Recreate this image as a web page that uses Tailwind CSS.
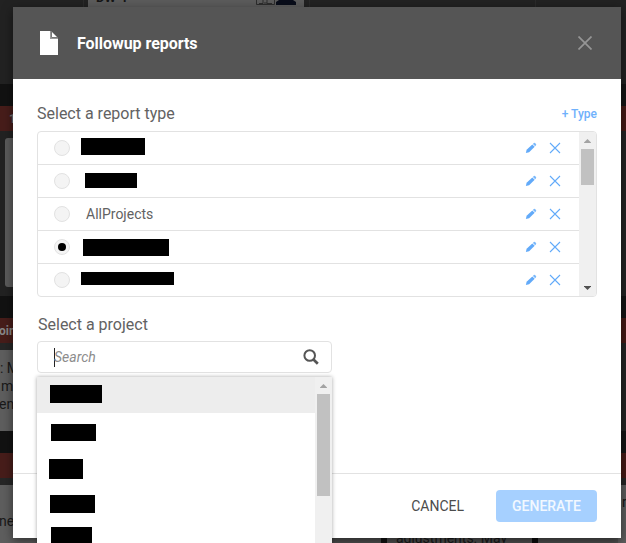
<!DOCTYPE html>
<html lang="en">
<head>
<meta charset="utf-8">
<title>Followup reports</title>
<script src="https://cdn.jsdelivr.net/npm/@tailwindcss/browser@4"></script>
</head>
<body class="h-[543px] w-[626px] overflow-hidden bg-[#222] font-[Roboto,sans-serif]">
<svg class="hidden">
  <symbol id="pencil" viewBox="0 0 12 12"><path d="M.9 11.100l.7-3.300L7.300 2.400l2.400 2.400L4.100 10.300z" fill="#62aaf9"/><path d="M7.900 1.900l.9-.8q.6-.5 1.200 0l1 1q.5.600 0 1.200l-.8.9z" fill="#7ab8fa"/></symbol>
  <symbol id="cross" viewBox="0 0 12 12"><path d="M1 1l10 10M11 1L1 11" stroke="#62aaf9" stroke-width="1.1" fill="none"/></symbol>
  <symbol id="up" viewBox="0 0 7 4"><path d="M0 4V3.500L3.500 0L7 3.500V4z" fill="currentColor"/></symbol>
</svg>
<div class="relative h-[543px] w-[626px] overflow-hidden">
  <!-- Dimmed board behind the dialog -->
  <div class="flex h-full justify-between">
    <div class="flex w-[83px] flex-col overflow-hidden whitespace-nowrap text-[13px] leading-[18px] text-[#191919]">
      <div class="h-[84px] shrink-0 bg-[#222]"></div>
      <div class="h-[22px] shrink-0 bg-[#121212]"></div>
      <div class="h-[25px] shrink-0 bg-[#471d1a] pl-[9px] text-[12px] leading-[26px] font-bold text-[#777]">10</div>
      <div class="h-[165px] shrink-0 bg-[#222] pt-[7px] pl-[5px]"><div class="h-[149px] rounded-[3px] bg-[#5c5c5c]"></div></div>
      <div class="h-[22px] shrink-0 bg-[#121212]"></div>
      <div class="h-[25px] shrink-0 bg-[#471d1a] text-[12px] leading-[26px] font-bold text-[#888]"><span class="-ml-px">oints</span></div>
      <div class="h-[7px] shrink-0 bg-[#262626]"></div>
      <div class="h-[81px] shrink-0 bg-[#5e5e5e] pt-[9px] text-[14px]"><div>: May</div><div class="ml-px">ments</div><div class="-ml-px">ents</div></div>
      <div class="h-[22px] shrink-0 bg-[#121212]"></div>
      <div class="h-[25px] shrink-0 bg-[#471d1a]"></div>
      <div class="h-[7px] shrink-0 bg-[#262626]"></div>
      <div class="h-[58px] shrink-0 bg-[#5e5e5e] pt-[27px] text-[14px]"><span class="-ml-px">nents</span></div>
    </div>
    <div class="flex h-full flex-1 flex-col justify-between overflow-hidden">
      <div class="flex h-[7px]">
        <div class="w-[5px] border-l border-[#2b2b2b]"></div>
        <div class="flex h-[7px] w-[216px] overflow-hidden bg-[#5c5c5c] pl-2 text-[13px] font-bold text-[#151515]">
          <div class="-mt-[9px] h-4 leading-[14px]">DW-1</div>
          <svg class="ml-auto h-[5px] w-[40px]" viewBox="0 0 40 5"><path d="M.5 0v4.500h18V0M3 3.500h4V0m4 0v3.500h5M8 3h3" stroke="#2d2d2d" fill="none"/><path d="M20 5V2l3-2h14l3 2v3z" fill="#090d1a"/></svg>
          <div class="w-2"></div>
        </div>
        <div class="ml-[5px] w-[227px] border-x border-[#2b2b2b]"></div>
      </div>
      <div class="ml-[249px] flex h-[10px] bg-[#505050] text-[14px] text-[#191919]">
        <div class="w-[49px]"></div><div class="w-[6px] bg-[#111]"></div>
        <div class="w-[145px] pl-[9px] whitespace-nowrap"><span class="block leading-[10px]">adjustments. May</span></div>
        <div class="w-[6px] bg-[#0c0c0c]"></div>
      </div>
    </div>
    <div class="flex w-[8px] flex-col overflow-hidden text-[14px] text-[#151515]">
      <div class="h-[84px] shrink-0 bg-[#222]"></div>
      <div class="h-[22px] shrink-0 bg-[#151515]"></div>
      <div class="h-[25px] shrink-0 bg-[#461a16]"></div>
      <div class="h-[165px] shrink-0 bg-[#242424]"></div>
      <div class="h-[22px] shrink-0 bg-[#151515]"></div>
      <div class="h-[25px] shrink-0 bg-[#461a16]"></div>
      <div class="h-[88px] shrink-0 bg-[#242424]"></div>
      <div class="h-[22px] shrink-0 bg-[#151515]"></div>
      <div class="h-[25px] shrink-0 bg-[#461a16]"></div>
      <div class="h-[7px] shrink-0 bg-[#262626]"></div>
      <div class="h-[58px] shrink-0 bg-[#5e5e5e] pt-[7px] pl-[4px]">r</div>
    </div>
  </div>

  <!-- Dialog -->
  <div class="absolute top-[7px] left-[13px] flex h-[531px] w-[608px] flex-col bg-white shadow-[0_3px_10px_rgba(0,0,0,0.5)]">
    <header class="flex h-[72px] items-center bg-[#555] pl-[27px]">
      <svg class="h-6 w-[18px]" viewBox="0 0 18 24"><path d="M0 0h10v8h8v16H0z" fill="#fff"/><path d="M10 0h1.500v6.500H18V8h-8z" fill="#999"/><path d="M12 1v5h5z" fill="#fff"/></svg>
      <h1 class="mt-[2px] ml-[19px] text-[16px] font-bold tracking-[-0.04px] text-white">Followup reports</h1>
      <svg class="mr-[29px] ml-auto h-[14px] w-[14px]" viewBox="0 0 14 14"><path d="M.5.5l13 13M13.500.500l-13 13" stroke="#959595" stroke-width="1.700"/></svg>
    </header>
    <main class="flex h-[394px] flex-col px-6 text-[#626262]">
      <div class="flex h-[52px] items-center justify-between pt-[18px]">
        <h2 class="text-[16px]">Select a report type</h2>
        <span class="text-[12px] font-medium text-[#6fb1fc]">+ Type</span>
      </div>
      <div class="flex h-[166px] w-[560px] overflow-hidden rounded border border-[#e2e2e2]">
        <div class="flex-1 divide-y divide-[#e2e2e2]">
          <div class="flex h-[33px] items-center pr-[18px] pl-4">
            <i class="h-4 w-4 rounded-full border border-[#e2e2e2] bg-[#f4f4f4]"></i>
            <b class="mt-[-3px] ml-[11px] h-[17px] w-16 bg-black"></b>
            <svg class="mr-3 ml-auto h-3 w-3"><use href="#pencil"/></svg><svg class="h-3 w-3"><use href="#cross"/></svg>
          </div>
          <div class="flex h-[33px] items-center pr-[18px] pl-4">
            <i class="h-4 w-4 rounded-full border border-[#e2e2e2] bg-[#f4f4f4]"></i>
            <b class="mt-[-1px] ml-[15px] h-[15px] w-[52px] bg-black"></b>
            <svg class="mr-3 ml-auto h-3 w-3"><use href="#pencil"/></svg><svg class="h-3 w-3"><use href="#cross"/></svg>
          </div>
          <div class="flex h-[33px] items-center pr-[18px] pl-4">
            <i class="h-4 w-4 rounded-full border border-[#e2e2e2] bg-[#f4f4f4]"></i>
            <span class="ml-4 text-[14px]">AllProjects</span>
            <svg class="mr-3 ml-auto h-3 w-3"><use href="#pencil"/></svg><svg class="h-3 w-3"><use href="#cross"/></svg>
          </div>
          <div class="flex h-[33px] items-center pr-[18px] pl-4">
            <i class="flex h-4 w-4 items-center justify-center rounded-full border border-[#e2e2e2] bg-[#f4f4f4]"><i class="h-2 w-2 rounded-full bg-black"></i></i>
            <b class="mt-px ml-[13px] h-[17px] w-[86px] bg-black"></b>
            <svg class="mr-3 ml-auto h-3 w-3"><use href="#pencil"/></svg><svg class="h-3 w-3"><use href="#cross"/></svg>
          </div>
          <div class="flex h-[32px] items-center pr-[18px] pl-4">
            <i class="h-4 w-4 rounded-full border border-[#e2e2e2] bg-[#f4f4f4]"></i>
            <b class="mt-[-3px] ml-[11px] h-[13px] w-[93px] bg-black"></b>
            <svg class="mr-3 ml-auto h-3 w-3"><use href="#pencil"/></svg><svg class="h-3 w-3"><use href="#cross"/></svg>
          </div>
        </div>
        <div class="flex w-[17px] flex-col items-center bg-[#f0f0f0] pt-[7px] pb-[6px]">
          <svg class="h-1 w-[7px] text-[#a3a3a3]"><use href="#up"/></svg>
          <div class="mt-[6px] h-9 w-[13px] bg-[#c1c1c1]"></div>
          <svg class="mt-auto h-1 w-[7px] rotate-180 text-[#505050]"><use href="#up"/></svg>
        </div>
      </div>
      <h2 class="mt-4 ml-px h-6 text-[16px]">Select a project</h2>
      <div class="mt-1 flex h-8 w-[295px] shrink-0 items-center rounded border border-[#e2e2e2] pr-3 pl-4">
        <i class="h-[19px] w-px bg-[#222]"></i>
        <span class="-ml-px text-[14px] text-[#8c8c8c] italic">Search</span>
        <svg class="ml-auto h-4 w-4" viewBox="0 0 16 16"><circle cx="6.700" cy="6.500" r="5.300" fill="none" stroke="#555" stroke-width="2"/><path d="M10.500 10.500l4.300 4.200" stroke="#555" stroke-width="2.700"/></svg>
      </div>
    </main>
    <footer class="flex flex-1 items-center justify-end border-t border-[#e2e2e2] pr-6 text-[14px]">
      <span class="mr-8 text-[#4c4c4c]">CANCEL</span>
      <button class="h-8 w-[101px] rounded bg-[#a6d0ff] font-medium text-white/85">GENERATE</button>
    </footer>
  </div>

  <!-- Project suggestions -->
  <div class="absolute top-[377px] left-[37px] flex h-[180px] w-[295px] bg-white shadow-[0_0_4px_rgba(0,0,0,0.35)]">
    <div class="flex flex-1 flex-col">
      <div class="h-9 bg-[#ededed] pt-2 pl-[13px]"><div class="h-[18px] w-[52px] bg-black"></div></div>
      <div class="h-9 pt-[11px] pl-[14px]"><div class="h-[17px] w-[45px] bg-black"></div></div>
      <div class="h-9 pt-[10px] pl-3"><div class="h-5 w-[34px] bg-black"></div></div>
      <div class="h-9 pt-[10px] pl-[13px]"><div class="h-[18px] w-[45px] bg-black"></div></div>
      <div class="h-9 pt-[6px] pl-[14px]"><div class="h-[18px] w-[41px] bg-black"></div></div>
    </div>
    <div class="flex w-[17px] flex-col items-center bg-[#f0f0f0] pt-[7px]">
      <svg class="h-1 w-[7px] text-[#a3a3a3]"><use href="#up"/></svg>
      <div class="mt-[6px] h-[102px] w-[13px] bg-[#c1c1c1]"></div>
    </div>
  </div>
</div>
</body>
</html>
